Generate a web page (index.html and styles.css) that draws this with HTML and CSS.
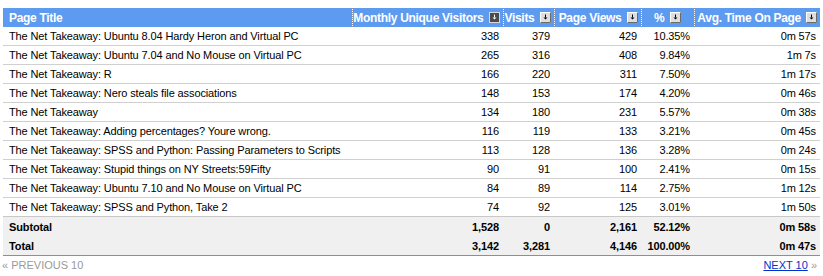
FILE: index.html
```html
<!DOCTYPE html>
<html>
<head>
<meta charset="utf-8">
<link rel="stylesheet" href="styles.css">
</head>
<body>
<table class="report">
  <colgroup>
    <col class="c-title"><col class="c-muv"><col class="c-visits"><col class="c-pv"><col class="c-pct"><col class="c-time">
  </colgroup>
  <thead>
    <tr>
      <th class="h-title">Page Title</th>
      <th>Monthly Unique Visitors <svg class="sort active" width="11" height="11" viewBox="0 0 11 11"><rect x="0.5" y="0.5" width="10" height="10" fill="#4b4b4b" stroke="#d8d8d8"/><path d="M5.5 2.5v3" stroke="#fff" stroke-width="1"/><path d="M3.5 5.5h4l-2 2z" fill="#fff"/></svg></th>
      <th>Visits <svg class="sort" width="11" height="11" viewBox="0 0 11 11"><rect x="0.5" y="0.5" width="10" height="10" fill="#dedede" stroke="#ffffff"/><path d="M10.5 0.5v10h-10" fill="none" stroke="#6a6a6a"/><path d="M5.5 2.5v3" stroke="#000" stroke-width="1"/><path d="M3.5 5.5h4l-2 2z" fill="#000"/></svg></th>
      <th>Page Views <svg class="sort" width="11" height="11" viewBox="0 0 11 11"><rect x="0.5" y="0.5" width="10" height="10" fill="#dedede" stroke="#ffffff"/><path d="M10.5 0.5v10h-10" fill="none" stroke="#6a6a6a"/><path d="M5.5 2.5v3" stroke="#000" stroke-width="1"/><path d="M3.5 5.5h4l-2 2z" fill="#000"/></svg></th>
      <th class="h-pct">% <svg class="sort" width="11" height="11" viewBox="0 0 11 11"><rect x="0.5" y="0.5" width="10" height="10" fill="#dedede" stroke="#ffffff"/><path d="M10.5 0.5v10h-10" fill="none" stroke="#6a6a6a"/><path d="M5.5 2.5v3" stroke="#000" stroke-width="1"/><path d="M3.5 5.5h4l-2 2z" fill="#000"/></svg></th>
      <th class="h-time">Avg. Time On Page <svg class="sort" width="11" height="11" viewBox="0 0 11 11"><rect x="0.5" y="0.5" width="10" height="10" fill="#dedede" stroke="#ffffff"/><path d="M10.5 0.5v10h-10" fill="none" stroke="#6a6a6a"/><path d="M5.5 2.5v3" stroke="#000" stroke-width="1"/><path d="M3.5 5.5h4l-2 2z" fill="#000"/></svg></th>
    </tr>
  </thead>
  <tbody>
    <tr><td>The Net Takeaway: Ubuntu 8.04 Hardy Heron and Virtual PC</td><td>338</td><td>379</td><td>429</td><td>10.35%</td><td>0m 57s</td></tr>
    <tr><td>The Net Takeaway: Ubuntu 7.04 and No Mouse on Virtual PC</td><td>265</td><td>316</td><td>408</td><td>9.84%</td><td>1m 7s</td></tr>
    <tr><td>The Net Takeaway: R</td><td>166</td><td>220</td><td>311</td><td>7.50%</td><td>1m 17s</td></tr>
    <tr><td>The Net Takeaway: Nero steals file associations</td><td>148</td><td>153</td><td>174</td><td>4.20%</td><td>0m 46s</td></tr>
    <tr><td>The Net Takeaway</td><td>134</td><td>180</td><td>231</td><td>5.57%</td><td>0m 38s</td></tr>
    <tr><td>The Net Takeaway: Adding percentages? Youre wrong.</td><td>116</td><td>119</td><td>133</td><td>3.21%</td><td>0m 45s</td></tr>
    <tr><td>The Net Takeaway: SPSS and Python: Passing Parameters to Scripts</td><td>113</td><td>128</td><td>136</td><td>3.28%</td><td>0m 24s</td></tr>
    <tr><td>The Net Takeaway: Stupid things on NY Streets:59Fifty</td><td>90</td><td>91</td><td>100</td><td>2.41%</td><td>0m 15s</td></tr>
    <tr><td>The Net Takeaway: Ubuntu 7.10 and No Mouse on Virtual PC</td><td>84</td><td>89</td><td>114</td><td>2.75%</td><td>1m 12s</td></tr>
    <tr><td>The Net Takeaway: SPSS and Python, Take 2</td><td>74</td><td>92</td><td>125</td><td>3.01%</td><td>1m 50s</td></tr>
  </tbody>
  <tfoot>
    <tr class="subtotal"><td>Subtotal</td><td>1,528</td><td>0</td><td>2,161</td><td>52.12%</td><td>0m 58s</td></tr>
    <tr class="total"><td>Total</td><td>3,142</td><td>3,281</td><td>4,146</td><td>100.00%</td><td>0m 47s</td></tr>
  </tfoot>
</table>
<div class="paging">
  <span class="prev">&laquo; PREVIOUS 10</span>
  <span class="next"><a href="#">NEXT 10</a> <span class="raquo">&raquo;</span></span>
</div>
</body>
</html>
```
FILE: styles.css
```css
html, body {
  margin: 0;
  padding: 0;
  background: #fff;
}
body {
  padding: 8px 3px 0 3px;
  font-family: "Liberation Sans", Arial, sans-serif;
  font-size: 11px;
  color: #000;
}
.report {
  width: 817px;
  border-collapse: collapse;
  table-layout: fixed;
}
.c-title { width: 349px; }
.c-muv { width: 151px; }
.c-visits { width: 51px; }
.c-pv { width: 87px; }
.c-pct { width: 53px; }
.c-time { width: 126px; }

.report th {
  background: #5c9bf0;
  color: #fff;
  font-weight: bold;
  font-size: 12px;
  letter-spacing: -0.3px;
  height: 19px;
  padding: 0 3px 0 0;
  text-align: right;
  white-space: nowrap;
  overflow: hidden;
  border-left: 1px dotted #8c8f9a;
  vertical-align: middle;
}
.report th.h-title {
  text-align: left;
  padding-left: 6px;
  border-left: none;
}
.report th.h-pct { padding-right: 13px; }
.report th.h-time { padding-right: 3px; }
.sort {
  vertical-align: -1px;
  margin-left: 2px;
}
.report td {
  height: 18px;
  padding: 0 4px 0 4px;
  text-align: right;
  letter-spacing: -0.12px;
  border-bottom: 1px solid #d0d0d0;
  white-space: nowrap;
  vertical-align: middle;
}
.report td:first-child {
  text-align: left;
  padding-left: 6px;
}
.report tbody tr:last-child td { border-bottom: 1px solid #c8c8c8; }
.report tfoot td {
  background: #f0f0f0;
  font-weight: bold;
  border-bottom: none;
  height: 19px;
}
.report tfoot tr.total td {
  border-bottom: 1px solid #8f8f8f;
}
.paging {
  display: flex;
  justify-content: space-between;
  padding: 3px 3px 0 0;
  margin-left: -1px;
  font-size: 11px;
  color: #999;
}
.paging a {
  color: #0033cc;
  text-decoration: underline;
}
.raquo { color: #999; }
```
